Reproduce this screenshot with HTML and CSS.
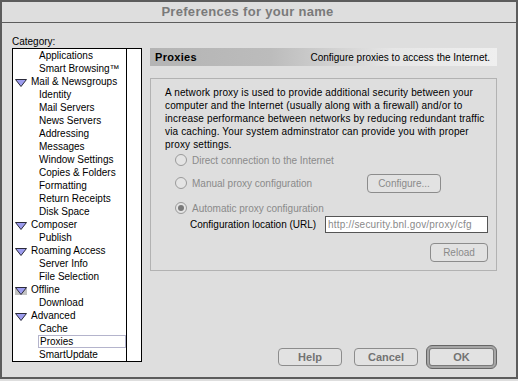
FILE: index.html
```html
<!DOCTYPE html>
<html lang="en">
<head>
    <meta charset="UTF-8">
    <title>Preferences for your name</title>
    <link rel="stylesheet" href="styles.css">
</head>
<body>
    <div class="window">
        <div class="titlebar">Preferences for your name</div>
        <div class="content">
            <div class="left">
                <div class="label">Category:</div>
                <div class="list">
                    <ul class="items">
                        <li class="sub">Applications</li>
                        <li class="sub">Smart Browsing™</li>
                        <li class="top"><svg class="tri" width="12" height="8" viewBox="0 0 12 8"><polygon points="0.5,0.5 11.5,0.5 6,7.5" /></svg>Mail &amp; Newsgroups</li>
                        <li class="sub">Identity</li>
                        <li class="sub">Mail Servers</li>
                        <li class="sub">News Servers</li>
                        <li class="sub">Addressing</li>
                        <li class="sub">Messages</li>
                        <li class="sub">Window Settings</li>
                        <li class="sub">Copies &amp; Folders</li>
                        <li class="sub">Formatting</li>
                        <li class="sub">Return Receipts</li>
                        <li class="sub">Disk Space</li>
                        <li class="top"><svg class="tri" width="12" height="8" viewBox="0 0 12 8"><polygon points="0.5,0.5 11.5,0.5 6,7.5" /></svg>Composer</li>
                        <li class="sub">Publish</li>
                        <li class="top"><svg class="tri" width="12" height="8" viewBox="0 0 12 8"><polygon points="0.5,0.5 11.5,0.5 6,7.5" /></svg>Roaming Access</li>
                        <li class="sub">Server Info</li>
                        <li class="sub">File Selection</li>
                        <li class="top"><svg class="tri hl" width="12" height="8" viewBox="0 0 12 8"><polygon points="0.5,0.5 11.5,0.5 6,7.5" /></svg>Offline</li>
                        <li class="sub">Download</li>
                        <li class="top"><svg class="tri" width="12" height="8" viewBox="0 0 12 8"><polygon points="0.5,0.5 11.5,0.5 6,7.5" /></svg>Advanced</li>
                        <li class="sub">Cache</li>
                        <li class="sub sel">Proxies</li>
                        <li class="sub">SmartUpdate</li>
                    </ul>
                    <div class="scroll"></div>
                </div>
            </div>
            <div class="right">
                <div class="header">
                    <b>Proxies</b>
                    <span>Configure proxies to access the Internet.</span>
                </div>
                <div class="group">
                    <p>A network proxy is used to provide additional security between your<br>
                    computer and the Internet (usually along with a firewall) and/or to<br>
                    increase performance between networks by reducing redundant traffic<br>
                    via caching. Your system adminstrator can provide you with proper<br>
                    proxy settings.</p>
                    <div class="opt direct"><span class="radio"></span>Direct connection to the Internet</div>
                    <div class="opt manual"><span class="radio"></span>Manual proxy configuration<span class="btn configure">Configure...</span></div>
                    <div class="opt auto"><span class="radio on"></span>Automatic proxy configuration</div>
                    <div class="url">
                        <span>Configuration location (URL)</span>
                        <div class="field">http://security.bnl.gov/proxy/cfg</div>
                    </div>
                    <div class="reload"><span class="btn">Reload</span></div>
                </div>
                <div class="actions">
                    <span class="btn big">Help</span>
                    <span class="btn big">Cancel</span>
                    <span class="btn big ok">OK</span>
                </div>
            </div>
        </div>
    </div>
</body>
</html>
```

FILE: styles.css
```css
* {
    padding: 0;
    margin: 0;
    box-sizing: border-box;
}
html {
    background-color: #dedede;
}
body {
    font-family: "Liberation Sans", Arial, sans-serif;
    font-size: 10px;
    color: #000;
}
li {
    list-style: none;
}
.window {
    width: 518px;
    height: 379px;
    border: 2px solid #5c5c5c;
    background-color: #dedede;
}
.titlebar {
    height: 21px;
    line-height: 20px;
    border-bottom: 1px solid #5c5c5c;
    padding-right: 23px;
    text-align: center;
    font-size: 13px;
    font-weight: bold;
    letter-spacing: 0.3px;
    color: #7a7a7a;
}
.content {
    display: flex;
    gap: 8px;
    padding-left: 10px;
}
.left {
    width: 130px;
}
.label {
    padding-top: 12px;
    height: 25px;
    line-height: 14px;
}
.list {
    display: flex;
    height: 314px;
    border: 1px solid #000;
    background-color: #fff;
}
.items {
    flex: 1;
}
.items li {
    display: flex;
    align-items: center;
    height: 13px;
    line-height: 13px;
    white-space: nowrap;
}
.items .sub {
    padding-left: 26px;
}
.items .top {
    padding-left: 2px;
}
.tri {
    width: 12px;
    height: 8px;
    margin-top: 2px;
    margin-right: 4px;
    fill: #9c9cee;
    stroke: #2a2a3a;
    stroke-width: 1;
}
.tri.hl {
    background-color: #c2c2c2;
}
.items .sel {
    margin-left: 25px;
    padding-left: 1px;
    border: 1px solid #b4b4cc;
}
.scroll {
    width: 15px;
    border-left: 1px solid #000;
}
.right {
    width: 347px;
    padding-top: 25px;
}
.header {
    display: flex;
    justify-content: space-between;
    align-items: center;
    height: 18px;
    padding: 0 7px 0 5px;
    background: linear-gradient(to right, #b4b4b4 0%, #bcbcbc 35%, #e6e6e6 70%, #efefef 100%);
}
.header b {
    font-size: 11px;
    letter-spacing: 0.3px;
}
.group {
    margin-top: 12px;
    height: 193px;
    border: 1px solid #b2b2b2;
    padding: 7px 8px 0 14px;
}
.group p {
    line-height: 13px;
    letter-spacing: 0.15px;
    white-space: nowrap;
}
.opt {
    display: flex;
    align-items: center;
    color: #8a8a8a;
}
.radio {
    width: 12px;
    height: 12px;
    margin: 0 5px 0 10px;
    border: 1px solid #9a9a9a;
    border-radius: 50%;
    background-color: #e4e4e4;
    display: flex;
    align-items: center;
    justify-content: center;
}
.radio.on::after {
    content: "";
    width: 6px;
    height: 6px;
    border-radius: 50%;
    background-color: #7a7a7a;
}
.direct {
    height: 18px;
}
.manual {
    height: 20px;
    margin-top: 4px;
}
.auto {
    height: 14px;
    margin-top: 8px;
}
.btn {
    display: inline-flex;
    align-items: center;
    justify-content: center;
    height: 19px;
    border: 1px solid #8c8c8c;
    border-radius: 4px;
    color: #8a8a8a;
    background-color: #e2e2e2;
}
.configure {
    width: 74px;
    margin-left: auto;
    margin-right: 47px;
    align-self: flex-end;
}
.url {
    display: flex;
    align-items: center;
    justify-content: space-between;
    height: 17px;
    margin-top: 1px;
    padding-left: 25px;
}
.field {
    width: 163px;
    height: 17px;
    line-height: 15px;
    padding-left: 2px;
    border: 1px solid #555;
    background-color: #fff;
    color: #8a8a8a;
    overflow: hidden;
    white-space: nowrap;
    letter-spacing: 0.2px;
}
.reload {
    display: flex;
    justify-content: flex-end;
    margin-top: 10px;
}
.reload .btn {
    width: 58px;
}
.actions {
    display: flex;
    justify-content: flex-end;
    align-items: center;
    margin-top: 74px;
}
.big {
    width: 64px;
    height: 18px;
    margin-right: 12px;
    font-size: 11px;
    font-weight: bold;
    color: #737373;
}
.big.ok {
    width: 71px;
    height: 24px;
    margin-right: 0;
    margin-left: -4px;
    border: 1px solid #666;
    border-radius: 6px;
    box-shadow: inset 0 0 0 2px #a6a6a6, inset 0 0 0 3px #7a7a7a;
}
```
